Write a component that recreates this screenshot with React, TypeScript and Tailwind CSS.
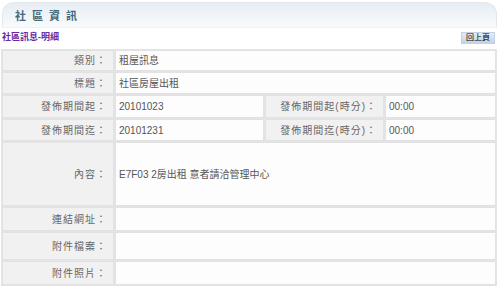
import React from "react";

const font = { fontFamily: '"Liberation Sans", "Noto Sans CJK TC", sans-serif' };

function Label({ text, className = "" }: { text: string; className?: string }) {
  return (
    <div
      className={`bg-[#f1f1f1] border border-[#e2e2e2] text-[#666] text-[10px] flex items-center justify-end pr-[6px] tracking-[1px] ${className}`}
    >
      {text}：
    </div>
  );
}

function Value({ text = "", className = "" }: { text?: string; className?: string }) {
  return (
    <div
      className={`bg-[#fdfdfd] border border-[#e2e2e2] text-[#555] text-[10px] flex items-center pl-[3px] ${className}`}
    >
      {text}
    </div>
  );
}

function Row({ label, value, h }: { label: string; value?: string; h: string }) {
  return (
    <div className={`flex gap-[1px] ${h}`}>
      <Label text={label} className="w-[112px]" />
      <Value text={value} className="flex-1" />
    </div>
  );
}

export default function App() {
  return (
    <div className="w-[500px] h-[286px] bg-white overflow-hidden" style={font}>
      {/* header tab */}
      <div className="pt-[2px] pl-[2px] pr-[3px]">
        <div className="h-[25px] rounded-t-[12px] border border-b-0 border-[#e3e8ec] bg-gradient-to-b from-[#e6edf3] to-[#f9fbfc] flex items-center pl-[12px]">
          <span className="text-[11px] tracking-[6px] text-[#45687a] font-semibold mt-[3px]">社區資訊</span>
        </div>
        <div className="h-[1px] bg-[#eef2f4]"></div>
      </div>

      {/* sub bar */}
      <div className="flex items-center justify-between h-[20px] pl-[2px] pr-[5px]">
        <span className="text-[9px] text-[#6a2aa0] font-bold">社區訊息-明細</span>
        <button className="h-[12px] px-[4px] text-[8px] leading-none text-black bg-gradient-to-b from-[#e2ecf7] to-[#bfd3ea] border border-[#c3d1e2]">
          回上頁
        </button>
      </div>

      {/* detail table */}
      <div className="ml-[1px] mr-[3px] mt-[1px] flex flex-col gap-[1px] bg-[#e4e4e4] p-[1px]">
        <Row label="類別" value="租屋訊息" h="h-[21px]" />
        <Row label="標題" value="社區房屋出租" h="h-[22px]" />
        <div className="flex gap-[1px] h-[23px]">
          <Label text="發佈期間起" className="w-[112px]" />
          <Value text="20101023" className="w-[149px]" />
          <Label text="發佈期間起(時分)" className="w-[119px]" />
          <Value text="00:00" className="flex-1" />
        </div>
        <div className="flex gap-[1px] h-[22px]">
          <Label text="發佈期間迄" className="w-[112px]" />
          <Value text="20101231" className="w-[149px]" />
          <Label text="發佈期間迄(時分)" className="w-[119px]" />
          <Value text="00:00" className="flex-1" />
        </div>
        <Row label="內容" value="E7F03 2房出租 意者請洽管理中心" h="h-[64px]" />
        <Row label="連結網址" h="h-[24px]" />
        <Row label="附件檔案" h="h-[28px]" />
        <Row label="附件照片" h="h-[24px]" />
      </div>
    </div>
  );
}
